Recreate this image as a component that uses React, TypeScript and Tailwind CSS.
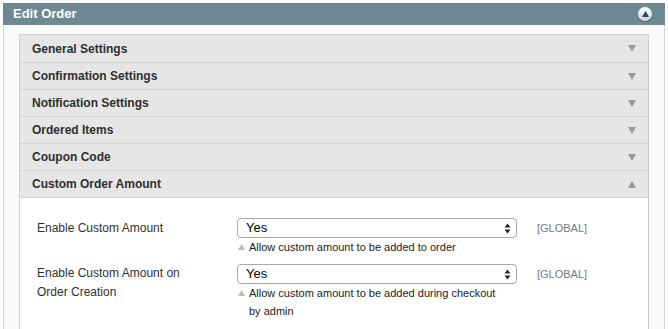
import React from "react";

const sections = [
  "General Settings",
  "Confirmation Settings",
  "Notification Settings",
  "Ordered Items",
  "Coupon Code",
];

function Select() {
  return (
    <div className="relative h-[20px] w-[280px] rounded-[4px] border border-[#a9a9a9] bg-white">
      <span className="absolute left-[8px] top-[1px] text-[13px] leading-[16px] text-black">Yes</span>
      <svg className="absolute right-[5px] top-[4px]" width="7" height="11" viewBox="0 0 7 11">
        <path d="M3.5 0.5 L6.5 4.5 L0.5 4.5 Z" fill="#222" />
        <path d="M3.5 10.5 L6.5 6.5 L0.5 6.5 Z" fill="#222" />
      </svg>
    </div>
  );
}

function Note({ children }: { children: React.ReactNode }) {
  return (
    <div className="flex items-start pl-[1px] text-[11px] leading-[18px] text-[#222]">
      <svg className="mr-[4px] mt-[6px] shrink-0" width="7" height="6" viewBox="0 0 7 6">
        <path d="M3.5 0 L7 6 L0 6 Z" fill="#b5bcbf" />
      </svg>
      <span>{children}</span>
    </div>
  );
}

function Caret({ up }: { up: boolean }) {
  return (
    <svg width="8" height="7" viewBox="0 0 8 7">
      <path d={up ? "M4 0 L8 7 L0 7 Z" : "M0 0 L8 0 L4 7 Z"} fill="#9a9a9a" />
    </svg>
  );
}

export default function App() {
  return (
    <div
      className="h-[329px] w-[668px] overflow-hidden bg-white pl-[3px] pr-[3px] pt-[3px]"
      style={{ fontFamily: '"Liberation Sans", Arial, sans-serif' }}
    >
      <div className="h-full border-x border-[#d6d6d6] bg-[#fafafa]">
        <div className="-mx-px flex h-[22px] items-center justify-between bg-[#6e8992] pl-[10px] pr-[13px]">
          <span className="text-[13px] font-bold text-white">Edit Order</span>
          <div className="flex h-[14px] w-[14px] items-center justify-center rounded-full bg-gradient-to-b from-white to-[#c9d3d6] shadow-[0_1px_1px_rgba(0,0,0,0.3)]">
            <svg width="7" height="6" viewBox="0 0 7 6">
              <path d="M3.5 0 L7 6 L0 6 Z" fill="#2b4a56" />
            </svg>
          </div>
        </div>
        <div className="ml-[15px] mr-[15px] mt-[9px] h-[400px] border border-[#d0d0d0] bg-white">
          {[...sections, "Custom Order Amount"].map((s, i) => (
            <div
              key={s}
              className={`flex h-[27px] items-center justify-between bg-[#e6e6e6] pl-[12px] pr-[12px] ${
                i === 0 ? "" : "border-t border-[#d3d3d3]"
              }`}
            >
              <span className="text-[12px] font-bold text-[#2f2f2f]">{s}</span>
              <Caret up={i === 5} />
            </div>
          ))}
          <div className="border-t border-[#d3d3d3] pt-[20px]">
            <div className="flex">
              <div className="w-[217px] pl-[17px] pt-[1px] text-[12px] leading-[19px] text-[#2f2f2f]">
                Enable Custom Amount
              </div>
              <div className="w-[300px]">
                <Select />
                <Note>Allow custom amount to be added to order</Note>
              </div>
              <div className="pt-[2px] text-[11px] leading-[16px] text-[#6f7b85]">[GLOBAL]</div>
            </div>
            <div className="mt-[8px] flex">
              <div className="w-[217px] pl-[17px] text-[12px] leading-[19px] text-[#2f2f2f]">
                Enable Custom Amount on
                <br />
                Order Creation
              </div>
              <div className="w-[300px]">
                <Select />
                <Note>
                  Allow custom amount to be added during checkout
                  <br />
                  by admin
                </Note>
              </div>
              <div className="pt-[2px] text-[11px] leading-[16px] text-[#6f7b85]">[GLOBAL]</div>
            </div>
          </div>
        </div>
      </div>
    </div>
  );
}
